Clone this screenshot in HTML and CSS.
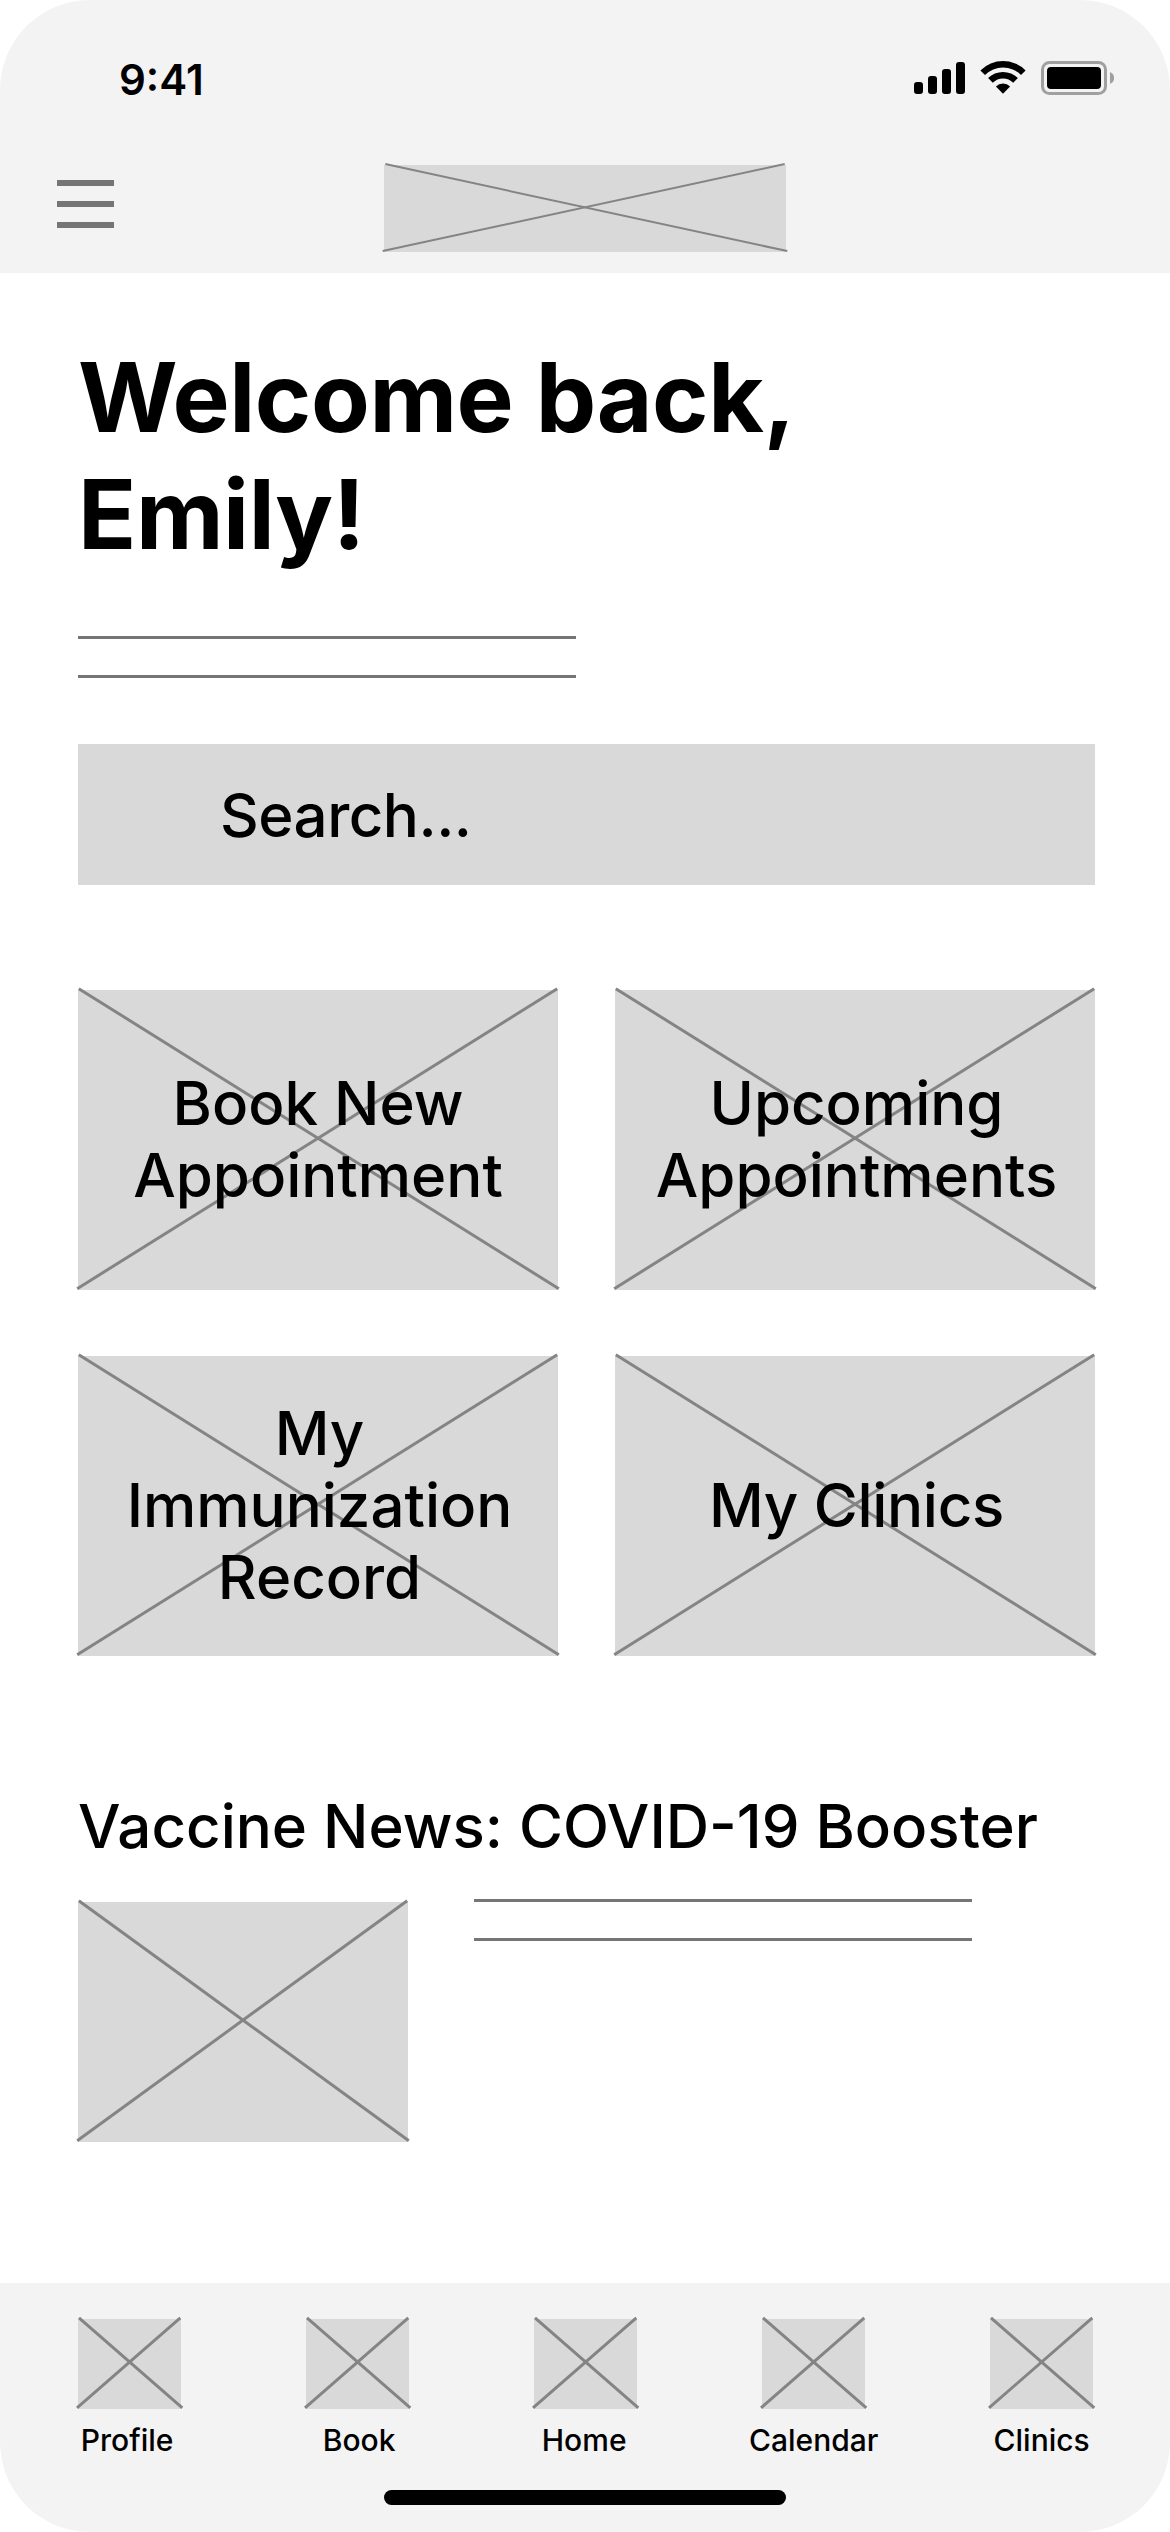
FILE: index.html
```html
<!DOCTYPE html>
<html lang="en">
<head>
    <meta charset="UTF-8">
    <meta name="viewport" content="width=device-width, initial-scale=1.0">
    <title>Vaccine App - Home</title>
    <link rel="stylesheet" href="styles.css">
</head>
<body>
    <div class="screen">
        <header class="header">
            <div class="status-bar">
                <span class="time">9:41</span>
                <div class="status-icons">
                    <svg class="signal" width="51" height="34" viewBox="0 0 51 34">
                        <rect x="0" y="21" width="9" height="12" rx="3"/>
                        <rect x="14" y="15" width="9" height="18" rx="3"/>
                        <rect x="28" y="8" width="9" height="25" rx="3"/>
                        <rect x="42" y="1" width="9" height="32" rx="3"/>
                    </svg>
                    <svg class="wifi" width="46" height="34" viewBox="0 0 46 34">
                        <path d="M0.4 9.4A32 32 0 0 1 45.6 9.4L41 14A25.4 25.4 0 0 0 5 14Z"/>
                        <path d="M8.1 17.1A21 21 0 0 1 37.9 17.1L33.2 21.8A14.4 14.4 0 0 0 12.8 21.8Z"/>
                        <path d="M15.9 25.4A10.2 10.2 0 0 1 30.1 25.4L23 32.7Z"/>
                    </svg>
                    <svg class="battery" width="73" height="34" viewBox="0 0 73 34">
                        <rect x="1.5" y="1.5" width="63" height="31" rx="7" fill="none" stroke="#a0a0a0" stroke-width="3"/>
                        <rect x="6" y="6" width="54" height="22" rx="4"/>
                        <path d="M69 11A6.4 6.4 0 0 1 69 23Z" fill="#a0a0a0"/>
                    </svg>
                </div>
            </div>
            <div class="top-nav">
                <div class="menu">
                    <span></span>
                    <span></span>
                    <span></span>
                </div>
                <div class="placeholder logo">
                    <svg class="cross"><line class="down" x1="0" y1="0" x2="100%" y2="100%"/><line class="up" x1="0" y1="100%" x2="100%" y2="0"/></svg>
                </div>
            </div>
        </header>

        <main class="content">
            <h1>Welcome back,<br>Emily!</h1>
            <div class="text-lines">
                <span></span>
                <span></span>
            </div>

            <div class="search">Search...</div>

            <div class="cards">
                <div class="placeholder card book-card">
                    <svg class="cross"><line class="down" x1="0" y1="0" x2="100%" y2="100%"/><line class="up" x1="0" y1="100%" x2="100%" y2="0"/></svg>
                    <span class="card-label">Book New<br>Appointment</span>
                </div>
                <div class="placeholder card">
                    <svg class="cross"><line class="down" x1="0" y1="0" x2="100%" y2="100%"/><line class="up" x1="0" y1="100%" x2="100%" y2="0"/></svg>
                    <span class="card-label">Upcoming<br>Appointments</span>
                </div>
                <div class="placeholder card">
                    <svg class="cross"><line class="down" x1="0" y1="0" x2="100%" y2="100%"/><line class="up" x1="0" y1="100%" x2="100%" y2="0"/></svg>
                    <span class="card-label">My<br>Immunization<br>Record</span>
                </div>
                <div class="placeholder card">
                    <svg class="cross"><line class="down" x1="0" y1="0" x2="100%" y2="100%"/><line class="up" x1="0" y1="100%" x2="100%" y2="0"/></svg>
                    <span class="card-label clinics-label">My Clinics</span>
                </div>
            </div>

            <h2>Vaccine News: COVID-19 Booster</h2>
            <div class="news">
                <div class="placeholder news-image">
                    <svg class="cross"><line class="down" x1="0" y1="0" x2="100%" y2="100%"/><line class="up" x1="0" y1="100%" x2="100%" y2="0"/></svg>
                </div>
                <div class="text-lines">
                    <span></span>
                    <span></span>
                </div>
            </div>
        </main>

        <footer class="footer">
            <nav class="tabs">
                <div class="tab">
                    <div class="placeholder tab-icon">
                        <svg class="cross"><line class="down" x1="0" y1="0" x2="100%" y2="100%"/><line class="up" x1="0" y1="100%" x2="100%" y2="0"/></svg>
                    </div>
                    <span class="tab-label profile">Profile</span>
                </div>
                <div class="tab">
                    <div class="placeholder tab-icon">
                        <svg class="cross"><line class="down" x1="0" y1="0" x2="100%" y2="100%"/><line class="up" x1="0" y1="100%" x2="100%" y2="0"/></svg>
                    </div>
                    <span class="tab-label book">Book</span>
                </div>
                <div class="tab">
                    <div class="placeholder tab-icon">
                        <svg class="cross"><line class="down" x1="0" y1="0" x2="100%" y2="100%"/><line class="up" x1="0" y1="100%" x2="100%" y2="0"/></svg>
                    </div>
                    <span class="tab-label home">Home</span>
                </div>
                <div class="tab">
                    <div class="placeholder tab-icon">
                        <svg class="cross"><line class="down" x1="0" y1="0" x2="100%" y2="100%"/><line class="up" x1="0" y1="100%" x2="100%" y2="0"/></svg>
                    </div>
                    <span class="tab-label">Calendar</span>
                </div>
                <div class="tab">
                    <div class="placeholder tab-icon">
                        <svg class="cross"><line class="down" x1="0" y1="0" x2="100%" y2="100%"/><line class="up" x1="0" y1="100%" x2="100%" y2="0"/></svg>
                    </div>
                    <span class="tab-label">Clinics</span>
                </div>
            </nav>
            <div class="home-indicator"></div>
        </footer>
    </div>
</body>
</html>
```
FILE: styles.css
```css
* {
    box-sizing: border-box;
}
body {
    margin: 0;
    background-color: white;
    color: black;
    font-family: Inter, sans-serif;
}
.screen {
    display: flex;
    flex-direction: column;
    width: 1170px;
    height: 2532px;
    border-radius: 90px;
    overflow: hidden;
}

/* header */
.header {
    height: 273px;
    background-color: #f3f3f3;
}
.status-bar {
    display: flex;
    justify-content: space-between;
    align-items: flex-start;
    height: 165px;
    padding: 54px 56px 0 119px;
}
.time {
    font-size: 42px;
    font-weight: 600;
    line-height: 51px;
}
.status-icons {
    display: flex;
    margin-top: 7px;
}
.wifi {
    margin-left: 15px;
}
.battery {
    margin-left: 15px;
}
.top-nav {
    display: flex;
    padding-left: 57px;
}
.menu {
    display: flex;
    flex-direction: column;
    gap: 15px;
    width: 57px;
    padding-top: 15px;
}
.menu span {
    height: 6px;
    background-color: #757575;
}

/* crossed boxes */
.placeholder {
    position: relative;
    background-color: #d9d9d9;
}
.cross {
    position: absolute;
    top: 0;
    left: 0;
    width: 100%;
    height: 100%;
    overflow: visible;
    stroke: #848484;
    stroke-width: 3;
}
.down {
    transform: translate(0.8px, -1.3px);
}
.up {
    transform: translate(-0.8px, -1.3px);
}
.logo {
    width: 402px;
    height: 87px;
    margin-left: 270px;
}
.logo .cross {
    stroke-width: 2;
}
.logo .down {
    transform: translate(1.3px, -0.9px);
}
.logo .up {
    transform: translate(-1.3px, -0.9px);
}

/* content */
.content {
    flex: 1;
    padding: 66px 75px 0 78px;
}
h1 {
    margin: 0;
    font-size: 96px;
    font-weight: 700;
    line-height: 117px;
    letter-spacing: -0.4px;
}
.text-lines {
    display: flex;
    flex-direction: column;
    gap: 36px;
    width: 498px;
}
.text-lines span {
    height: 3px;
    background-color: #757575;
}
h1 + .text-lines {
    margin-top: 63px;
}
.search {
    height: 141px;
    margin-top: 66px;
    padding-left: 142px;
    background-color: #d9d9d9;
    font-size: 60px;
    font-weight: 500;
    line-height: 143px;
    letter-spacing: -0.5px;
}
.cards {
    display: grid;
    grid-template-columns: 480px 480px;
    column-gap: 57px;
    row-gap: 66px;
    margin-top: 105px;
}
.card {
    display: flex;
    justify-content: center;
    align-items: center;
    height: 300px;
    padding: 0 0 2px 3px;
}
.book-card {
    padding-left: 0;
}
.card-label {
    position: relative;
    font-size: 60px;
    font-weight: 500;
    line-height: 72px;
    text-align: center;
}
.clinics-label {
    letter-spacing: -0.3px;
}
h2 {
    margin: 134px 0 0;
    font-size: 60px;
    font-weight: 500;
    line-height: 73px;
}
.news {
    display: flex;
    gap: 66px;
    margin-top: 36px;
}
.news-image {
    width: 330px;
    height: 240px;
    margin-top: 3px;
}

/* footer */
.footer {
    height: 249px;
    padding-top: 36px;
    background-color: #f3f3f3;
}
.tabs {
    display: flex;
    justify-content: space-between;
    padding: 0 76.7px 0 78px;
}
.tab {
    display: flex;
    flex-direction: column;
    align-items: center;
    width: 103.3px;
}
.tab-icon {
    width: 103.3px;
    height: 90px;
}
.tab-icon .down {
    transform: translate(1px, -1.1px);
}
.tab-icon .up {
    transform: translate(-1px, -1.1px);
}
.tab-label {
    margin-top: 13px;
    font-size: 30px;
    font-weight: 500;
    line-height: 36px;
    white-space: nowrap;
}
.profile {
    margin-right: 5px;
}
.book {
    margin-left: 3px;
}
.home {
    margin-right: 3px;
}
.home-indicator {
    width: 402px;
    height: 15px;
    margin: 32px auto 0;
    border-radius: 7.5px;
    background-color: black;
}
```
